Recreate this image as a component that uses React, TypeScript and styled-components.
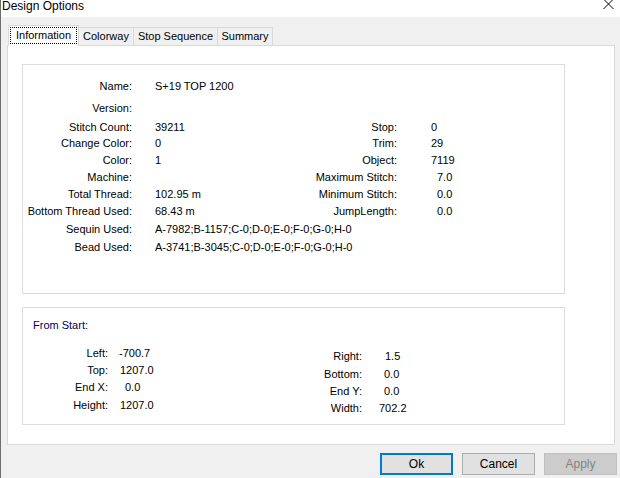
import styled, { createGlobalStyle } from "styled-components";

const GlobalStyle = createGlobalStyle`
    html, body {
        margin: 0;
        padding: 0;
        background: #f0f0f0;
    }
    body {
        font-family: "Liberation Sans", Arial, sans-serif;
        font-size: 11px;
        color: #000;
    }
    * {
        box-sizing: border-box;
    }
`;

const Window = styled.div`
    width: 620px;
    height: 478px;
    border-left: 1px solid #6e6e6e;
    background: #f0f0f0;
    display: flex;
    flex-direction: column;
    overflow: hidden;
`;
const TitleBar = styled.div`
    height: 17px;
    background: #fff;
    display: flex;
    justify-content: space-between;
    align-items: flex-start;
`;
const TitleText = styled.div`
    font-size: 12px;
    line-height: 12px;
    padding-left: 1px;
`;
const CloseIcon = styled.svg`
    width: 11px;
    height: 11px;
    margin: 0 6px 0 0;
`;
const Body = styled.div`
    padding: 8px 5px 0 6px;
    display: flex;
    flex-direction: column;
`;
const TabStrip = styled.div`
    height: 20px;
    display: flex;
    align-items: flex-end;
    padding-left: 1px;
`;
const Tab = styled.div<{ $active?: boolean; $w: number }>`
    position: relative;
    z-index: ${p => (p.$active ? 1 : 0)};
    width: ${p => p.$w}px;
    height: ${p => (p.$active ? "21px" : "18px")};
    margin-bottom: ${p => (p.$active ? "-1px" : "0")};
    padding: 1px 1px 0;
    background: ${p => (p.$active ? "#fff" : "#f0f0f0")};
    border: 1px solid #d9d9d9;
    border-bottom: none;
    border-left: ${p => (p.$active ? "1px solid #d9d9d9" : "none")};
    line-height: 15px;
    text-align: center;
    white-space: nowrap;
`;
const FocusRect = styled.span`
    display: block;
    height: 17px;
    border: 1px dotted #000;
    line-height: 15px;
`;
const Panel = styled.div`
    height: 400px;
    border: 1px solid #d9d9d9;
    background: #fff;
    padding: 18px 0 0 14px;
    display: flex;
    flex-direction: column;
    gap: 13px;
`;
const GroupBox = styled.div<{ $h: number }>`
    width: 543px;
    height: ${p => p.$h}px;
    border: 1px solid #dcdcdc;
`;
const InfoGrid = styled.div`
    display: grid;
    padding-top: 10px;
    grid-template-columns: 109px 163px 102px 1fr;
    grid-template-rows: 22px 21px 17px 16px 17px 17px 17px 18px 18px 17px;
    align-items: center;
`;
const Label = styled.div`
    text-align: right;
    white-space: nowrap;
`;
const Value = styled.div<{ $pad: number; $span?: boolean }>`
    padding-left: ${p => p.$pad}px;
    white-space: nowrap;
    grid-column: ${p => (p.$span ? "2 / 5" : "auto")};
`;
const Heading = styled.div`
    padding: 10px 0 0 10px;
    line-height: 14px;
    color: #00005e;
`;
const CoordRow = styled.div`
    display: flex;
    margin-top: 12px;
`;
const CoordGrid = styled.div<{ $labelW: number; $w: number; $top: number; $rows: string }>`
    display: grid;
    width: ${p => p.$w}px;
    margin-top: ${p => p.$top}px;
    grid-template-columns: ${p => p.$labelW}px 1fr;
    grid-template-rows: ${p => p.$rows};
    align-items: center;
`;
const Footer = styled.div`
    display: flex;
    justify-content: flex-end;
    gap: 9px;
    padding-top: 8px;
    margin-right: -2px;
`;
const Button = styled.div<{ $variant?: "default" | "disabled" }>`
    width: 73px;
    height: 22px;
    display: flex;
    align-items: center;
    justify-content: center;
    font-size: 12px;
    background: ${p => (p.$variant === "disabled" ? "#cccccc" : "#e1e1e1")};
    color: ${p => (p.$variant === "disabled" ? "#838383" : "#000")};
    border: ${p =>
        p.$variant === "default"
            ? "2px solid #0078d7"
            : p.$variant === "disabled"
            ? "1px solid #bfbfbf"
            : "1px solid #adadad"};
`;

const tabs: [string, number][] = [
    ["Information", 71],
    ["Colorway", 55],
    ["Stop Sequence", 84],
    ["Summary", 55]
];

const infoRows: [string, string, number, string, string, number][] = [
    ["Name:", "S+19 TOP 1200", 23, "", "", 0],
    ["Version:", "", 23, "", "", 0],
    ["Stitch Count:", "39211", 23, "Stop:", "0", 34],
    ["Change Color:", "0", 23, "Trim:", "29", 34],
    ["Color:", "1", 23, "Object:", "7119", 34],
    ["Machine:", "", 23, "Maximum Stitch:", "7.0", 40],
    ["Total Thread:", "102.95 m", 23, "Minimum Stitch:", "0.0", 40],
    ["Bottom Thread Used:", "68.43 m", 23, "JumpLength:", "0.0", 40]
];

const usedRows = [
    ["Sequin Used:", "A-7982;B-1157;C-0;D-0;E-0;F-0;G-0;H-0"],
    ["Bead Used:", "A-3741;B-3045;C-0;D-0;E-0;F-0;G-0;H-0"]
];

const startLeft: [string, string, number][] = [
    ["Left:", "-700.7", 11],
    ["Top:", "1207.0", 12],
    ["End X:", "0.0", 17],
    ["Height:", "1207.0", 12]
];
const startRight: [string, string, number][] = [
    ["Right:", "1.5", 23],
    ["Bottom:", "0.0", 22],
    ["End Y:", "0.0", 22],
    ["Width:", "702.2", 17]
];

function App() {
    return (
        <>
            <GlobalStyle />
            <Window>
                <TitleBar>
                    <TitleText>Design Options</TitleText>
                    <CloseIcon viewBox="0 0 11 11">
                        <path d="M0.5 -1 L10.5 9 M10.5 -1 L0.5 9" stroke="#000" strokeWidth="1" fill="none" />
                    </CloseIcon>
                </TitleBar>
                <Body>
                    <TabStrip>
                        {tabs.map(([t, w], i) =>
                            i === 0 ? (
                                <Tab $active $w={w} key={t}>
                                    <FocusRect>{t}</FocusRect>
                                </Tab>
                            ) : (
                                <Tab $w={w} key={t}>
                                    {t}
                                </Tab>
                            )
                        )}
                    </TabStrip>
                    <Panel>
                        <GroupBox $h={230}>
                            <InfoGrid>
                                {infoRows.map(([l1, v1, p1, l2, v2, p2]) => (
                                    <>
                                        <Label key={l1}>{l1}</Label>
                                        <Value $pad={p1}>{v1}</Value>
                                        <Label>{l2}</Label>
                                        <Value $pad={p2}>{v2}</Value>
                                    </>
                                ))}
                                {usedRows.map(([l, v]) => (
                                    <>
                                        <Label key={l}>{l}</Label>
                                        <Value $pad={23} $span>
                                            {v}
                                        </Value>
                                    </>
                                ))}
                            </InfoGrid>
                        </GroupBox>
                        <GroupBox $h={118}>
                            <Heading>From Start:</Heading>
                            <CoordRow>
                                <CoordGrid $labelW={85} $w={277} $top={0} $rows="17px 17px 18px 18px">
                                    {startLeft.map(([l, v, p]) => (
                                        <>
                                            <Label key={l}>{l}</Label>
                                            <Value $pad={p}>{v}</Value>
                                        </>
                                    ))}
                                </CoordGrid>
                                <CoordGrid $labelW={62} $w={200} $top={3} $rows="18px 17px 17px 17px">
                                    {startRight.map(([l, v, p]) => (
                                        <>
                                            <Label key={l}>{l}</Label>
                                            <Value $pad={p}>{v}</Value>
                                        </>
                                    ))}
                                </CoordGrid>
                            </CoordRow>
                        </GroupBox>
                    </Panel>
                    <Footer>
                        <Button $variant="default">Ok</Button>
                        <Button>Cancel</Button>
                        <Button $variant="disabled">Apply</Button>
                    </Footer>
                </Body>
            </Window>
        </>
    );
}

export default App;
